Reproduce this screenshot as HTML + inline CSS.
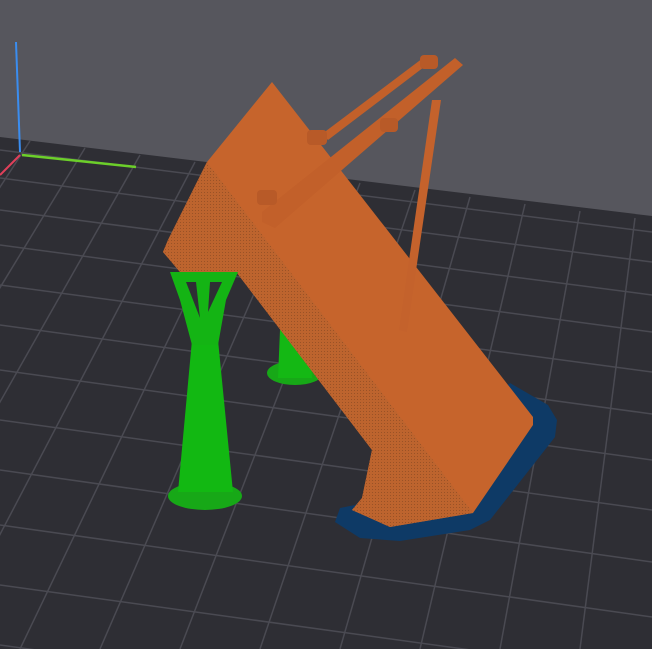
<!DOCTYPE html>
<html><head><style>html,body{margin:0;padding:0;background:#2e2e34;overflow:hidden;width:652px;height:649px}svg{display:block}</style></head>
<body>
<svg width="652" height="649" viewBox="0 0 652 649" xmlns="http://www.w3.org/2000/svg">
<defs>
<pattern id="tex" width="3" height="3" patternUnits="userSpaceOnUse"><rect width="3" height="3" fill="#bd642e"/><rect width="1" height="1" fill="#9a5226"/></pattern>
</defs>
<rect width="652" height="649" fill="#2e2e34"/>
<polygon points="0,0 652,0 652,216 0,137" fill="#56565d"/>
<g stroke="#4a4a52" stroke-width="1.5" fill="none">
<path d="M0,178 L652,262"/><path d="M0,210 L652,295"/><path d="M0,245 L652,332"/><path d="M0,285 L652,372"/>
<path d="M0,325 L652,414"/><path d="M0,370 L652,460"/><path d="M0,420 L652,510"/><path d="M0,470 L652,562"/>
<path d="M0,525 L652,617"/><path d="M0,585 L652,675"/><path d="M0,645 L652,735"/>
<path d="M0,150 L652,232"/>
<path d="M30,141 L-300,649"/><path d="M85,148 L-220,649"/><path d="M140,155 L-140,649"/><path d="M195,162 L-60,649"/>
<path d="M250,169 L20,649"/><path d="M305,176 L100,649"/><path d="M360,183 L180,649"/><path d="M415,190 L260,649"/>
<path d="M470,197 L340,649"/><path d="M525,204 L420,649"/><path d="M580,211 L500,649"/><path d="M635,218 L580,649"/>
<path d="M690,225 L660,649"/>
</g>
<line x1="16" y1="42" x2="20" y2="152" stroke="#3a8df0" stroke-width="2"/>
<line x1="22" y1="155" x2="136" y2="167" stroke="#6ccf2a" stroke-width="2.5"/>
<line x1="20" y1="155" x2="0" y2="175" stroke="#e0405a" stroke-width="2"/>
<ellipse cx="295" cy="373" rx="28" ry="12" fill="#17a817"/>
<polygon points="280,330 310,330 312,378 278,378" fill="#14b814"/>
<polygon points="510,383 548,405 557,420 555,437 490,520 470,530 400,541 360,538 335,522 340,508 355,505" fill="#0e3a66"/>
<polygon points="272,82 533,417 533,425 473,513 390,527 352,510 362,498 372,450 237,273 180,272 163,252 168,240 207,162" fill="#c6642c"/>
<polygon points="207,162 168,240 163,252 180,272 237,273 372,450 362,498 352,510 390,527 473,513" fill="url(#tex)"/>
<polygon points="455,58 463,65 275,228 262,222 262,212" fill="#c2602a"/>
<polygon points="423,58 428,64 328,140 322,134" fill="#c2602a"/>
<polygon points="432,100 441,100 407,332 399,330" fill="#c4622c"/>
<rect x="420" y="55" width="18" height="14" rx="4" fill="#b85a28"/>
<rect x="380" y="118" width="18" height="14" rx="4" fill="#b85a28"/>
<rect x="307" y="130" width="20" height="15" rx="4" fill="#b85a28"/>
<rect x="257" y="190" width="20" height="15" rx="4" fill="#b85a28"/>
<ellipse cx="205" cy="496" rx="37" ry="14" fill="#17a817"/>
<polygon points="192,340 218,340 233,492 178,492" fill="#12b812"/>
<polygon points="170,272 238,272 226,300 218,345 192,345 180,300" fill="#14b414"/>
<polygon points="186,282 196,282 200,318" fill="#2e2e34"/>
<polygon points="210,282 222,282 208,312" fill="#2e2e34"/>
</svg>
</body></html>
